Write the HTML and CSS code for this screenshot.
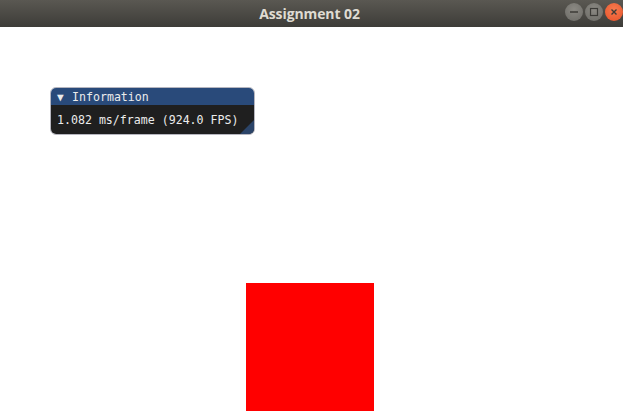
FILE: index.html
```html
<!DOCTYPE html>
<html>
<head>
<meta charset="utf-8">
<link rel="stylesheet" href="styles.css">
</head>
<body>
<div class="titlebar">
  <div class="title">Assignment 02</div>
  <div class="buttons">
    <span class="btn btn-min"><svg width="18" height="18" viewBox="0 0 18 18"><line x1="5" y1="9" x2="13" y2="9" stroke="#3c3b37" stroke-width="1.5"/></svg></span>
    <span class="btn btn-max"><svg width="18" height="18" viewBox="0 0 18 18"><rect x="5.5" y="5.5" width="7" height="7" fill="none" stroke="#3c3b37" stroke-width="1.2"/></svg></span>
    <span class="btn btn-close"><svg width="18" height="18" viewBox="0 0 18 18"><path d="M6.5 6.5 L11.5 11.5 M11.5 6.5 L6.5 11.5" stroke="#3c3b37" stroke-width="1.4"/></svg></span>
  </div>
</div>
<div class="canvas">
  <div class="imgui">
    <div class="imgui-title"><span class="arrow">▼</span>Information</div>
    <div class="imgui-body">1.082 ms/frame (924.0 FPS)</div>
    <div class="grip"></div>
  </div>
  <div class="square"></div>
</div>
</body>
</html>
```
FILE: styles.css
```css
html, body {
  margin: 0;
  padding: 0;
  width: 623px;
  height: 414px;
  overflow: hidden;
  background: #ffffff;
}
.titlebar {
  height: 27px;
  background: linear-gradient(#5a5852, #3d3c38);
  display: flex;
  align-items: center;
  justify-content: center;
  position: relative;
}
.title {
  font-family: "Open Sans", "DejaVu Sans", sans-serif;
  font-weight: 700;
  font-size: 14px;
  color: #dfdbd2;
  letter-spacing: -0.1px;
  margin-right: 4px;
}
.buttons {
  position: absolute;
  right: 0px;
  top: 3px;
  display: flex;
  gap: 2px;
}
.btn {
  width: 18px;
  height: 18px;
  border-radius: 50%;
  display: flex;
  align-items: center;
  justify-content: center;
}
.btn-min, .btn-max {
  background: radial-gradient(circle at 50% 35%, #8b8983, #6b6a65);
}
.btn-close {
  background: radial-gradient(circle at 50% 35%, #f57a4d, #e8522a);
}
.canvas {
  position: relative;
  height: 387px;
}
.imgui {
  position: absolute;
  left: 50px;
  top: 60px;
  width: 203px;
  border: 1px solid rgba(110, 110, 128, 0.5);
  border-radius: 6px;
  overflow: hidden;
  font-family: "DejaVu Sans Mono", "Liberation Mono", monospace;
  font-size: 11.6px;
  color: #ececec;
}
.imgui-title {
  background: #294a7a;
  height: 17px;
  line-height: 18px;
  padding-left: 6px;
  white-space: pre;
}
.arrow {
  font-size: 11px;
  display: inline-block;
  width: 15px;
}
.imgui-body {
  background: #1f1f1f;
  height: 29px;
  line-height: 30px;
  padding-left: 6px;
  white-space: pre;
}
.grip {
  position: absolute;
  right: 0;
  bottom: 0;
  width: 0;
  height: 0;
  border-style: solid;
  border-width: 0 0 14px 14px;
  border-color: transparent transparent #2b4468 transparent;
}
.square {
  position: absolute;
  left: 246px;
  top: 256px;
  width: 128px;
  height: 128px;
  background: #ff0000;
}
```
